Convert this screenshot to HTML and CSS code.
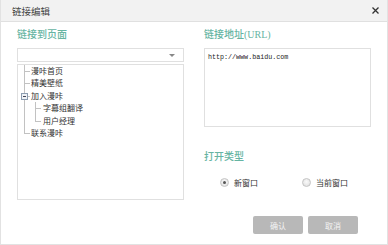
FILE: index.html
```html
<!DOCTYPE html>
<html lang="zh-CN">
  <head>
    <meta charset="UTF-8" />
    <title>链接编辑</title>
    <link rel="stylesheet" href="styles.css">
  </head>
  <body>
    <div class="dialog">
      <!-- Judul -->
      <div class="dialog-title">
        <span>链接编辑</span>
        <svg class="close" width="7" height="7" viewBox="0 0 7 7">
          <path d="M0.5 0.5 L6.5 6.5 M6.5 0.5 L0.5 6.5" stroke="#333" stroke-width="1.3" />
        </svg>
      </div>

      <div class="dialog-body">
        <!-- Kolom kiri -->
        <div class="col">
          <div class="label">链接到页面</div>
          <div class="select"><span class="arrow"></span></div>
          <div class="tree-box">
            <ul class="tree">
              <li>漫咔首页</li>
              <li>精美壁纸</li>
              <li><span class="toggle"></span>加入漫咔
                <ul>
                  <li>字幕组翻译</li>
                  <li>用户经理</li>
                </ul>
              </li>
              <li>联系漫咔</li>
            </ul>
          </div>
        </div>

        <!-- Kolom kanan -->
        <div class="col">
          <div class="label">链接地址(URL)</div>
          <div class="url-box">http://www.baidu.com</div>
          <div class="label label-type">打开类型</div>
          <div class="radios">
            <label class="radio"><span class="dot checked"></span>新窗口</label>
            <label class="radio"><span class="dot"></span>当前窗口</label>
          </div>
          <div class="actions">
            <button class="btn">确认</button>
            <button class="btn">取消</button>
          </div>
        </div>
      </div>
    </div>
  </body>
</html>
```

FILE: styles.css
```css
body {
  margin: 0;
  padding: 0;
  background-color: #fff;
  font-family: "Noto Sans CJK SC", sans-serif;
}

.dialog {
  width: 388px;
  height: 245px;
  box-sizing: border-box;
  border: 1px solid #e2e2e2;
  border-top: none;
  background-color: #fff;
}

/* Judul */
.dialog-title {
  height: 21px;
  background-color: #f2f2f2;
  border-bottom: 1px solid #e0e0e0;
  display: flex;
  align-items: center;
  justify-content: space-between;
  padding: 0 8px 0 11px;
  font-size: 9.5px;
  color: #444;
}

.close {
  display: block;
}

.dialog-body {
  display: flex;
  gap: 20px;
  padding: 6px 0 0 16px;
}

.col {
  width: 167px;
  display: flex;
  flex-direction: column;
}

.label {
  height: 14px;
  line-height: 14px;
  font-size: 10px;
  color: #66b4a2;
  font-family: "Liberation Serif", "Noto Sans CJK SC", serif;
  font-weight: 500;
}

.select {
  margin-top: 6px;
  height: 14px;
  box-sizing: border-box;
  border: 1px solid #e0e0e0;
  position: relative;
}

.arrow {
  position: absolute;
  right: 8px;
  top: 5px;
  border-left: 3px solid transparent;
  border-right: 3px solid transparent;
  border-top: 3px solid #888;
}

.tree-box {
  margin-top: 2px;
  height: 136px;
  box-sizing: border-box;
  border: 1px solid #e0e0e0;
}

/* Pohon halaman */
.tree,
.tree ul {
  list-style: none;
  margin: 0;
  padding: 0;
}

.tree ul {
  margin-left: -2px;
}

.tree li {
  position: relative;
  padding-left: 13px;
  line-height: 12.4px;
  font-size: 8px;
  color: #333;
}

.tree ul li {
  padding-left: 14px;
}

.tree li::before {
  content: "";
  position: absolute;
  left: 6px;
  top: 0;
  bottom: 0;
  border-left: 1px solid #c2c2c2;
}

.tree li:last-child::before {
  bottom: auto;
  height: 6px;
}

.tree li::after {
  content: "";
  position: absolute;
  left: 6px;
  top: 6px;
  width: 6px;
  border-top: 1px solid #c2c2c2;
}

.toggle {
  position: absolute;
  left: 3px;
  top: 3px;
  width: 5px;
  height: 5px;
  border: 1px solid #8c9cb0;
  background-color: #eef2f6;
  z-index: 1;
}

.toggle::after {
  content: "";
  position: absolute;
  left: 1px;
  top: 2px;
  width: 3px;
  border-top: 1px solid #445;
}

.url-box {
  margin-top: 6px;
  height: 79px;
  box-sizing: border-box;
  border: 1px solid #e0e0e0;
  padding: 4px 3px;
  font-family: "Liberation Mono", monospace;
  font-size: 6.7px;
  line-height: 8px;
  color: #222;
}

.label-type {
  margin-top: 23px;
}

.radios {
  margin-top: 12px;
  height: 12px;
  display: flex;
  align-items: center;
  padding-left: 16px;
  gap: 44px;
  font-size: 8px;
  color: #333;
}

.radio {
  display: flex;
  align-items: center;
  gap: 5px;
}

.dot {
  width: 9px;
  height: 9px;
  box-sizing: border-box;
  border-radius: 50%;
  border: 1px solid #c4c4c4;
  background: radial-gradient(circle at 50% 40%, #fafafa, #dcdcdc);
  position: relative;
}

.dot.checked::after {
  content: "";
  position: absolute;
  left: 2px;
  top: 2px;
  width: 3px;
  height: 3px;
  border-radius: 50%;
  background-color: #555;
}

.actions {
  margin-top: 28px;
  display: flex;
  gap: 5px;
  padding-left: 49px;
}

.btn {
  width: 50px;
  height: 18px;
  border: none;
  border-radius: 2px;
  background-color: #b8b8b8;
  color: #f4f4f4;
  font-family: "Noto Sans CJK SC", sans-serif;
  font-size: 8px;
  padding: 0;
  cursor: pointer;
}
```
